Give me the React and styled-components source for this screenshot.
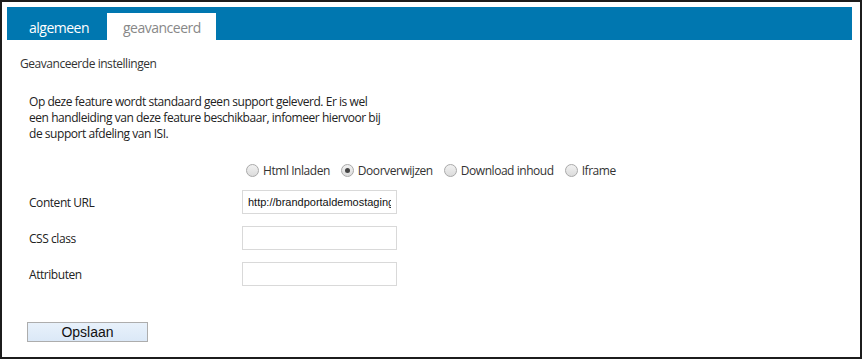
import styled, { createGlobalStyle } from 'styled-components'

const GlobalStyle = createGlobalStyle`
  html, body {
    margin: 0;
    padding: 0;
    background: #fff;
  }
  body {
    font-family: "Open Sans", "DejaVu Sans", sans-serif;
    font-size: 12px;
    letter-spacing: -0.45px;
    color: #222;
  }
`

const Frame = styled.div`
  box-sizing: border-box;
  width: 862px;
  height: 359px;
  border: 2px solid #1c1c1c;
  padding: 5px 8px 0 5px;
  background: #fff;
`

const TabBar = styled.div`
  display: flex;
  align-items: flex-end;
  height: 33px;
  background: #0077b0;
`

const Tab = styled.div`
  box-sizing: border-box;
  height: 27px;
  display: flex;
  align-items: center;
  padding: ${(p) => (p.$active ? '2px 18px 0 22px' : '2px 16px 0 16px')};
  width: ${(p) => (p.$active ? '100px' : '109px')};
  font-size: 14px;
  letter-spacing: -0.5px;
  color: ${(p) => (p.$active ? '#fff' : '#888')};
  background: ${(p) => (p.$active ? 'transparent' : '#fff')};
`

const Heading = styled.div`
  margin: 16px 0 0 13px;
  font-size: 12px;
  line-height: 16px;
  color: #333;
`

const Intro = styled.p`
  margin: 22px 0 0 22px;
  width: 355px;
  line-height: 16px;
  color: #222;
`

const Form = styled.div`
  display: grid;
  grid-template-columns: 213px 1fr;
  margin: 0 0 0 22px;
`

const RadioRow = styled.div`
  grid-column: 2;
  display: flex;
  align-items: center;
  height: 16px;
  margin-top: 20px;
  margin-bottom: 12px;
  padding-left: 4px;
`

const RadioOption = styled.label`
  display: flex;
  align-items: center;
  gap: 4px;
  margin-right: 11px;
  color: #333;
`

const Radio = styled.span`
  box-sizing: border-box;
  width: 13px;
  height: 13px;
  border-radius: 50%;
  border: 1px solid #a9a9a9;
  background: linear-gradient(#f1f1f1, #dcdcdc);
  display: flex;
  align-items: center;
  justify-content: center;

  &::after {
    content: '';
    width: 5px;
    height: 5px;
    border-radius: 50%;
    background: ${(p) => (p.$checked ? '#444' : 'transparent')};
  }
`

const Label = styled.div`
  display: flex;
  align-items: center;
  height: 24px;
  margin-bottom: 12px;
  color: #222;
`

const Field = styled.input`
  box-sizing: border-box;
  width: 155px;
  height: 24px;
  margin: 0 0 12px;
  padding: 0 5px;
  border: 1px solid #d9d9d9;
  font-family: "Liberation Sans", Arial, sans-serif;
  font-size: 11px;
  letter-spacing: 0;
  color: #111;
  background: #fff;
  outline: none;
`

const SaveButton = styled.button`
  display: block;
  box-sizing: border-box;
  width: 121px;
  height: 20px;
  margin: 24px 0 0 20px;
  padding: 0;
  border: 1px solid #adadad;
  background: linear-gradient(#e8f1fb, #dbe8f7);
  font-family: "Liberation Sans", Arial, sans-serif;
  font-size: 14px;
  letter-spacing: 0;
  color: #111;
`

const options = [
  { label: 'Html Inladen' },
  { label: 'Doorverwijzen', checked: true },
  { label: 'Download inhoud' },
  { label: 'Iframe' },
]

const fields = [
  { label: 'Content URL', value: 'http://brandportaldemostaging' },
  { label: 'CSS class', value: '' },
  { label: 'Attributen', value: '' },
]

export default function App() {
  return (
    <>
      <GlobalStyle />
      <Frame>
        <TabBar>
          <Tab $active>algemeen</Tab>
          <Tab>geavanceerd</Tab>
        </TabBar>
        <Heading>Geavanceerde instellingen</Heading>
        <Intro>
          Op deze feature wordt standaard geen support geleverd. Er is wel een handleiding van
          deze feature beschikbaar, infomeer hiervoor bij de support afdeling van ISI.
        </Intro>
        <Form>
          <RadioRow>
            {options.map((o) => (
              <RadioOption key={o.label}>
                <Radio $checked={o.checked} />
                {o.label}
              </RadioOption>
            ))}
          </RadioRow>
          {fields.map((f) => (
            <FieldRow key={f.label} {...f} />
          ))}
        </Form>
        <SaveButton>Opslaan</SaveButton>
      </Frame>
    </>
  )
}

function FieldRow({ label, value }) {
  return (
    <>
      <Label>{label}</Label>
      <Field defaultValue={value} />
    </>
  )
}
